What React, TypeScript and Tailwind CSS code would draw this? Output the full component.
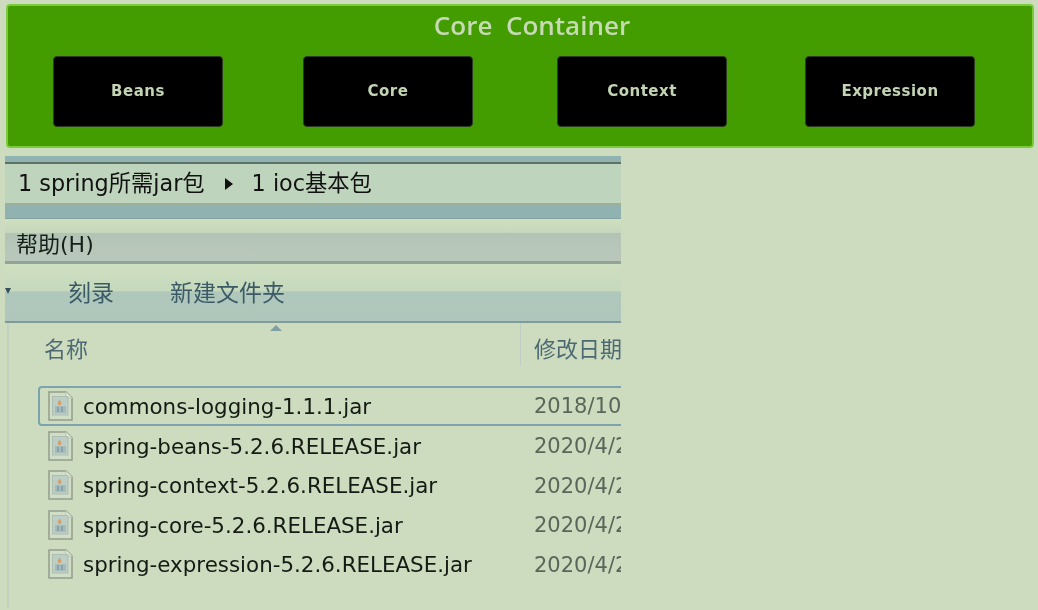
const FONT = '"DejaVu Sans","Noto Sans CJK SC",sans-serif';

const modules = [
  { name: "Beans", cls: "ml-[45px]" },
  { name: "Core", cls: "ml-[80px]" },
  { name: "Context", cls: "ml-[84px]" },
  { name: "Expression", cls: "ml-[78px]" },
];

const files = [
  { name: "commons-logging-1.1.1.jar", date: "2018/10/12" },
  { name: "spring-beans-5.2.6.RELEASE.jar", date: "2020/4/28" },
  { name: "spring-context-5.2.6.RELEASE.jar", date: "2020/4/28" },
  { name: "spring-core-5.2.6.RELEASE.jar", date: "2020/4/28" },
  { name: "spring-expression-5.2.6.RELEASE.jar", date: "2020/4/28" },
];

function JarIcon() {
  return (
    <svg width="25" height="30" viewBox="0 0 25 30" className="shrink-0">
      <path d="M1 1H18L24 7V29H1Z" fill="#d0ddc7" stroke="#929d8c" strokeWidth="1.5" />
      <path d="M18 1V7H24" fill="#e3ecdb" stroke="#b9c3b2" strokeWidth="1" />
      <rect x="4.5" y="5.5" width="15.5" height="18.5" fill="#bccec6" stroke="#a9b8aa" strokeWidth="0.8" />
      <path d="M11.5 8.5L13.5 11.5L12.8 14H10.2L9.8 11.5Z" fill="#d5a06a" />
      <rect x="7" y="15" width="11" height="7" fill="#a4bbbc" />
      <rect x="9" y="16" width="2" height="5" fill="#8aa3aa" />
      <rect x="13" y="16" width="2" height="5" fill="#8aa3aa" />
    </svg>
  );
}

export default function App() {
  return (
    <div className="w-[1038px] h-[610px] overflow-hidden bg-[#cddcbf] flex flex-col" style={{ fontFamily: FONT }}>
      <div className="mt-[4px] ml-[6px] w-[1028px] h-[144px] shrink-0 bg-[#439c00] border-2 border-[#7ccb3c] rounded-[4px] flex flex-col">
        <div className="h-[50px] pt-[2px] pl-[24px] flex justify-center">
          <span className="text-[26px] leading-[34px] font-semibold text-[#c6dab4] whitespace-pre blur-[0.4px]" style={{ fontFamily: '"Open Sans",sans-serif' }}>
            Core  Container
          </span>
        </div>
        <div className="flex">
          {modules.map((m) => (
            <div
              key={m.name}
              className={`w-[170px] h-[71px] bg-black border border-[#2b3a22] rounded-[4px] flex items-center justify-center text-[15px] font-bold tracking-[0.5px] text-[#c3d4b5] blur-[0.4px] ${m.cls}`}
            >
              {m.name}
            </div>
          ))}
        </div>
      </div>

      <div className="mt-[8px] ml-[5px] w-[616px] flex-1 flex flex-col overflow-hidden blur-[0.35px]">
        <div className="h-[6px] bg-[#90b3b1]" />
        <div className="h-[2px] bg-[#5f7268]" />
        <div className="h-[39px] bg-[#bfd4bd] flex items-center pl-[13px] text-[22.3px] text-[#111] whitespace-nowrap">
          <span>1 spring所需jar包</span>
          <span className="ml-[20px] mr-[19px] w-0 h-0 border-y-[6px] border-y-transparent border-l-[8px] border-l-[#111]" />
          <span>1 ioc基本包</span>
        </div>
        <div className="h-[2px] bg-[#9fb09a]" />
        <div className="h-[14px] bg-[#90b3b1] border-b border-[#84a5a1]" />
        <div className="h-[42px] pt-[9px] bg-[linear-gradient(to_bottom,#cfdfbf_0%,#c7d7bc_32%,#b3c4b6_34%,#b9c8bb_100%)] flex items-center pl-[11px] text-[22px] text-[#15201a] whitespace-nowrap">
          帮助(H)
        </div>
        <div className="h-[3px] bg-[#90a598]" />
        <div className="relative h-[57px] pt-[2px] bg-[linear-gradient(to_bottom,#cfdfc0_0%,#c6d9bd_47%,#b0c8bc_49%,#aec6bb_100%)] flex items-center text-[23px] text-[#3c5a66] whitespace-nowrap">
          <span className="absolute left-0 top-[24px] w-0 h-0 border-x-[3px] border-x-transparent border-t-[6px] border-t-[#33505c]" />
          <span className="ml-[63px]">刻录</span>
          <span className="ml-[56px]">新建文件夹</span>
        </div>
        <div className="h-[2px] bg-[#7f9c98]" />
        <div className="relative flex-1 mb-[2px] ml-[2px] border-l-2 border-l-[#c0d3c2] bg-[#cddcbf]">
          <span className="absolute left-[261px] top-[2px] w-0 h-0 border-x-[6px] border-x-transparent border-b-[6px] border-b-[#7f9fa5]" />
          <div className="h-[43px] flex items-center text-[22px] text-[#4d6a74] whitespace-nowrap">
            <span className="w-[511px] pl-[35px] pt-[10px] shrink-0">名称</span>
            <span className="h-full border-l border-[#bccfc4] pl-[13px] pt-[10px]">修改日期</span>
          </div>
          <div className="mt-[20px] flex flex-col">
            {files.map((f, i) => (
              <div
                key={f.name}
                className={
                  i === 0
                    ? "h-[40px] flex items-center shrink-0 whitespace-nowrap ml-[29px] w-[620px] pl-[8px] border-2 border-[#7da3ae] rounded-[4px]"
                    : "h-[39.5px] flex items-center shrink-0 whitespace-nowrap ml-[29px] w-[620px] pl-[10px]"
                }
              >
                <JarIcon />
                <span className="ml-[10px] w-[451px] shrink-0 pt-[2px] text-[21.4px] text-[#141a14]">{f.name}</span>
                <span className="pt-[2px] text-[21px] text-[#5b665b]">{f.date}</span>
              </div>
            ))}
          </div>
        </div>
      </div>
    </div>
  );
}
